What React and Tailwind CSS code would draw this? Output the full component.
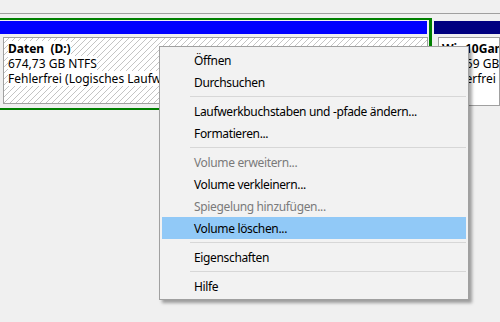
import React from "react";

const items = [
  { t: "Öffnen" },
  { t: "Durchsuchen" },
  { sep: true },
  { t: "Laufwerkbuchstaben und -pfade ändern..." },
  { t: "Formatieren..." },
  { sep: true },
  { t: "Volume erweitern...", off: true },
  { t: "Volume verkleinern..." },
  { t: "Spiegelung hinzufügen...", off: true },
  { t: "Volume löschen...", hot: true },
  { sep: true },
  { t: "Eigenschaften" },
  { sep: true },
  { t: "Hilfe" },
];

const hatch =
  "bg-[repeating-linear-gradient(135deg,#ffffff_0_3.2px,#c4c4c4_3.2px_4.24px)]";

const ContextMenu = () => (
  <div className="absolute left-[159px] top-[46px] w-[310px] bg-[#f2f2f2] border border-[#a0a0a0] p-[2px] tracking-[-0.35px] shadow-[3px_3px_3px_rgba(0,0,0,0.35)]">
    {items.map((it, i) =>
      it.sep ? (
        <div key={i} className="h-[7px] pl-[28px] pt-[3px]">
          <div className="h-px bg-[#d7d7d7]" />
        </div>
      ) : (
        <div
          key={i}
          className={`h-[22px] pl-[32px] flex items-center ${it.hot ? "bg-[#91c9f7]" : ""} ${it.off ? "text-[#7a7a7a]" : "text-black"}`}
        >
          {it.t}
        </div>
      )
    )}
  </div>
);

export default function App() {
  return (
    <div className="relative w-[500px] h-[322px] overflow-hidden bg-[#f0f0f0] text-[12px] leading-[15px] font-['Noto_Sans',sans-serif]">
      <div className="h-[13px]" />
      <div className="h-px bg-[#a0a0a0]" />
      <div className="h-[4px]" />
      <div className="flex">
        <div className="w-[432px] h-[92px] shrink-0 border-t-2 border-b-2 border-r-[3px] border-[#008000] pt-px flex flex-col">
          <div className="h-[13px] mr-[2px] bg-[#0000ff]" />
          <div className={`mt-[3px] ml-[3px] mr-[1px] h-[67px] border border-[#a0a0a0] px-[4px] pt-[3px] whitespace-nowrap overflow-hidden ${hatch}`}>
            <div className="bg-white w-fit font-bold">Daten&nbsp; (D:)</div>
            <div className="bg-white w-fit">674,73 GB NTFS</div>
            <div className="bg-white w-fit">Fehlerfrei (Logisches Laufwerk)</div>
          </div>
        </div>
        <div className="ml-[2px] flex-1 min-w-0 pt-[3px] flex flex-col">
          <div className="h-[13px] bg-[#000080]" />
          <div className="mt-[3px] ml-[4px] h-[69px] bg-white border border-[#a0a0a0] px-[3px] pt-[3px] whitespace-nowrap overflow-hidden">
            <div className="font-bold">Win10Games (C:)</div>
            <div>465,59 GB NTFS</div>
            <div>Fehlerfrei (Primäre Partition)</div>
          </div>
        </div>
      </div>
      <ContextMenu />
    </div>
  );
}
